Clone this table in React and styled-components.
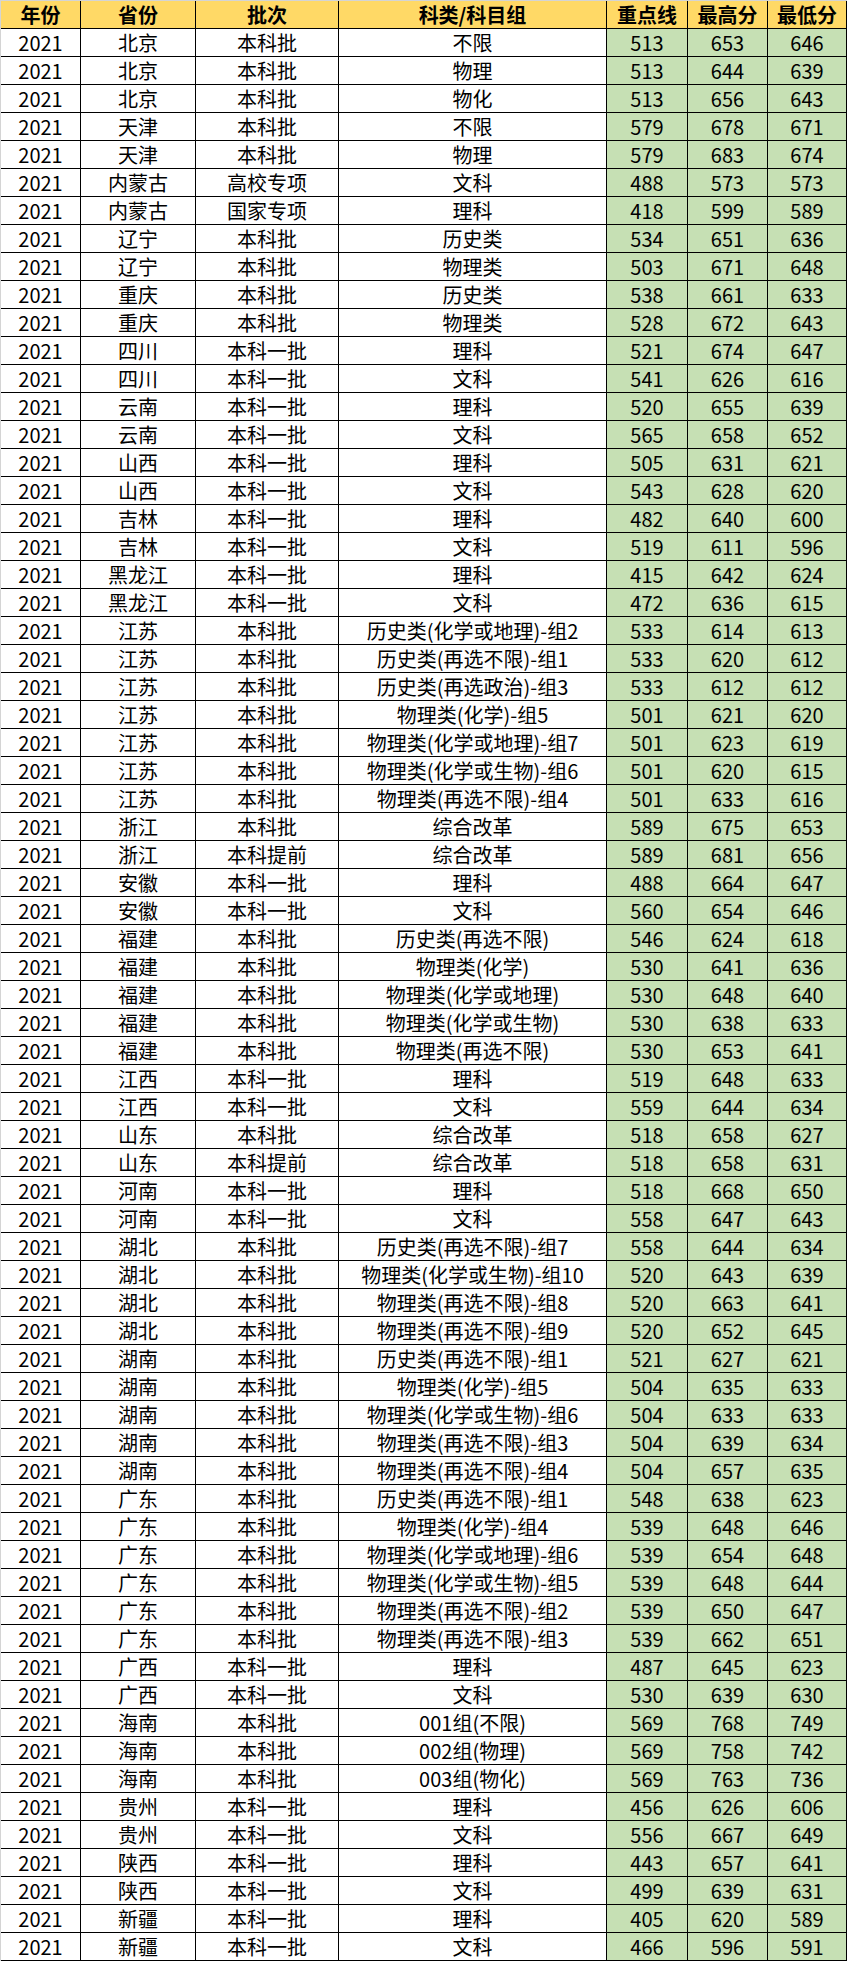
import React from 'react'
import styled, { createGlobalStyle } from 'styled-components';

const GlobalStyle = createGlobalStyle`
    body {
        margin: 0;
        background: #d4d4d4;
        font-family: "Noto Sans CJK SC", "Noto Sans", sans-serif;
    }
`;

const Sheet = styled.div`
    padding: 1px 0 0 1px;
    width: 847px;
    box-sizing: border-box;
`;

const Row = styled.div`
    display: grid;
    grid-template-columns: 80px 115px 143px 268px 81px 80px 79px;
    height: 28px;
`;

const Cell = styled.div`
    box-sizing: border-box;
    border-right: 1px solid #000;
    border-bottom: 1px solid #000;
    display: flex;
    align-items: center;
    justify-content: center;
    font-size: 20px;
    line-height: 1;
    color: #000;
    white-space: nowrap;
    background: ${p => p.$head ? '#ffd966' : p.$score ? '#c6e0b4' : '#ffffff'};
    font-weight: ${p => p.$head ? 700 : 400};
`;

const heads = ['年份', '省份', '批次', '科类/科目组', '重点线', '最高分', '最低分'];

const rows = `北京 本科批 不限 513 653 646
北京 本科批 物理 513 644 639
北京 本科批 物化 513 656 643
天津 本科批 不限 579 678 671
天津 本科批 物理 579 683 674
内蒙古 高校专项 文科 488 573 573
内蒙古 国家专项 理科 418 599 589
辽宁 本科批 历史类 534 651 636
辽宁 本科批 物理类 503 671 648
重庆 本科批 历史类 538 661 633
重庆 本科批 物理类 528 672 643
四川 本科一批 理科 521 674 647
四川 本科一批 文科 541 626 616
云南 本科一批 理科 520 655 639
云南 本科一批 文科 565 658 652
山西 本科一批 理科 505 631 621
山西 本科一批 文科 543 628 620
吉林 本科一批 理科 482 640 600
吉林 本科一批 文科 519 611 596
黑龙江 本科一批 理科 415 642 624
黑龙江 本科一批 文科 472 636 615
江苏 本科批 历史类(化学或地理)-组2 533 614 613
江苏 本科批 历史类(再选不限)-组1 533 620 612
江苏 本科批 历史类(再选政治)-组3 533 612 612
江苏 本科批 物理类(化学)-组5 501 621 620
江苏 本科批 物理类(化学或地理)-组7 501 623 619
江苏 本科批 物理类(化学或生物)-组6 501 620 615
江苏 本科批 物理类(再选不限)-组4 501 633 616
浙江 本科批 综合改革 589 675 653
浙江 本科提前 综合改革 589 681 656
安徽 本科一批 理科 488 664 647
安徽 本科一批 文科 560 654 646
福建 本科批 历史类(再选不限) 546 624 618
福建 本科批 物理类(化学) 530 641 636
福建 本科批 物理类(化学或地理) 530 648 640
福建 本科批 物理类(化学或生物) 530 638 633
福建 本科批 物理类(再选不限) 530 653 641
江西 本科一批 理科 519 648 633
江西 本科一批 文科 559 644 634
山东 本科批 综合改革 518 658 627
山东 本科提前 综合改革 518 658 631
河南 本科一批 理科 518 668 650
河南 本科一批 文科 558 647 643
湖北 本科批 历史类(再选不限)-组7 558 644 634
湖北 本科批 物理类(化学或生物)-组10 520 643 639
湖北 本科批 物理类(再选不限)-组8 520 663 641
湖北 本科批 物理类(再选不限)-组9 520 652 645
湖南 本科批 历史类(再选不限)-组1 521 627 621
湖南 本科批 物理类(化学)-组5 504 635 633
湖南 本科批 物理类(化学或生物)-组6 504 633 633
湖南 本科批 物理类(再选不限)-组3 504 639 634
湖南 本科批 物理类(再选不限)-组4 504 657 635
广东 本科批 历史类(再选不限)-组1 548 638 623
广东 本科批 物理类(化学)-组4 539 648 646
广东 本科批 物理类(化学或地理)-组6 539 654 648
广东 本科批 物理类(化学或生物)-组5 539 648 644
广东 本科批 物理类(再选不限)-组2 539 650 647
广东 本科批 物理类(再选不限)-组3 539 662 651
广西 本科一批 理科 487 645 623
广西 本科一批 文科 530 639 630
海南 本科批 001组(不限) 569 768 749
海南 本科批 002组(物理) 569 758 742
海南 本科批 003组(物化) 569 763 736
贵州 本科一批 理科 456 626 606
贵州 本科一批 文科 556 667 649
陕西 本科一批 理科 443 657 641
陕西 本科一批 文科 499 639 631
新疆 本科一批 理科 405 620 589
新疆 本科一批 文科 466 596 591`.split('\n').map(l => ['2021', ...l.split(' ')]);

export default function App() {
    return (
        <Sheet>
            <GlobalStyle />
            <Row>
                {heads.map(h => <Cell key={h} $head>{h}</Cell>)}
            </Row>
            {rows.map((r, i) => (
                <Row key={i}>
                    {r.map((v, j) => <Cell key={j} $score={j >= 4}>{v}</Cell>)}
                </Row>
            ))}
        </Sheet>
    )
}
